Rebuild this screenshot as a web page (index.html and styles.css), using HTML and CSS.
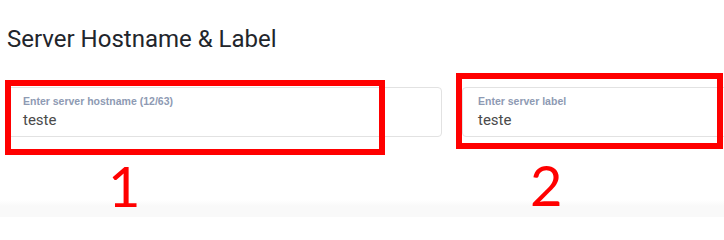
FILE: index.html
```html
<!DOCTYPE html>
<html>
<head>
<meta charset="utf-8">
<link rel="stylesheet" href="styles.css">
</head>
<body>
<div class="page">
  <h2 class="title">Server Hostname &amp; Label</h2>
  <div class="fields">
    <div class="field">
      <div class="label">Enter server hostname (12/63)</div>
      <div class="value">teste</div>
    </div>
    <div class="field">
      <div class="label">Enter server label</div>
      <div class="value">teste</div>
    </div>
  </div>
</div>
<div class="mark mark-1"></div>
<div class="mark mark-2"></div>
<div class="num num-1">1</div>
<div class="num num-2">2</div>
</body>
</html>
```
FILE: styles.css
```css
html, body {
  margin: 0;
  padding: 0;
}
body {
  min-height: 217px;
  background: linear-gradient(to bottom, #ffffff 0, #ffffff 200px, #f9f9f9 206px, #f9f9f9 100%);
}
.page {
  padding: 0 0 0 7px;
  overflow: hidden;
}
.title {
  margin: 0;
  padding-top: 25px;
  font-family: Roboto, "Liberation Sans", sans-serif;
  font-weight: 400;
  font-size: 24px;
  line-height: 28px;
  color: #22252b;
}
.fields {
  display: flex;
  gap: 20px;
  margin-top: 34px;
  overflow: hidden;
}
.field {
  flex: 0 0 435px;
  box-sizing: border-box;
  height: 50px;
  border: 1px solid #e2e2e2;
  border-radius: 4px;
  padding: 7px 0 0 15px;
  background: #ffffff;
  font-family: "Liberation Sans", Arial, sans-serif;
}
.label {
  font-size: 10.5px;
  font-weight: 700;
  line-height: 13px;
  color: #8e9ab3;
}
.value {
  font-family: Roboto, "Liberation Sans", sans-serif;
  font-size: 15px;
  line-height: 20px;
  color: #4a4a4a;
  margin-top: 2px;
}
.mark {
  position: absolute;
  box-sizing: border-box;
  border: 6px solid #ff0000;
}
.mark-1 {
  left: 5px;
  top: 80px;
  width: 380px;
  height: 75px;
}
.mark-2 {
  left: 456px;
  top: 73px;
  width: 267px;
  height: 76px;
}
.num {
  position: absolute;
  font-family: Lato, "DejaVu Sans", sans-serif;
  font-size: 56px;
  line-height: 1;
  color: #ff0000;
}
.num-1 { left: 108px; top: 158px; }
.num-2 { left: 530px; top: 157px; }
```
